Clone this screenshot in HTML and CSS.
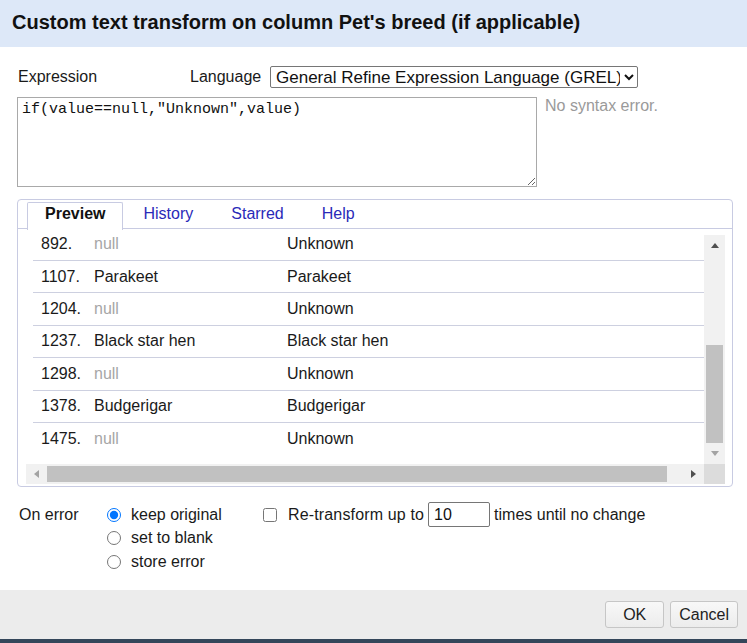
FILE: index.html
```html
<!DOCTYPE html>
<html>
<head>
<meta charset="utf-8">
<link rel="stylesheet" href="styles.css">
</head>
<body>
<div class="dialog">
  <div class="header">Custom text transform on column Pet's breed (if applicable)</div>
  <div class="body">
    <div class="expr-row">
      <span class="expr-label">Expression</span>
      <span class="lang-label">Language</span>
      <select class="lang-select"><option>General Refine Expression Language (GREL)</option></select>
    </div>
    <div class="editor-row">
      <textarea class="editor" spellcheck="false">if(value==null,"Unknown",value)</textarea>
      <div class="status">No syntax error.</div>
    </div>
    <div class="tabs">
      <div class="tabnav">
        <div class="tab active">Preview</div>
        <div class="tab">History</div>
        <div class="tab">Starred</div>
        <div class="tab">Help</div>
      </div>
      <div class="panel">
        <div class="scroller">
          <div class="viewport">
            <div class="rows">
              <div class="row"><span class="c-idx">892.</span><span class="c-val null">null</span><span class="c-res">Unknown</span></div>
              <div class="row"><span class="c-idx">1107.</span><span class="c-val">Parakeet</span><span class="c-res">Parakeet</span></div>
              <div class="row"><span class="c-idx">1204.</span><span class="c-val null">null</span><span class="c-res">Unknown</span></div>
              <div class="row"><span class="c-idx">1237.</span><span class="c-val">Black star hen</span><span class="c-res">Black star hen</span></div>
              <div class="row"><span class="c-idx">1298.</span><span class="c-val null">null</span><span class="c-res">Unknown</span></div>
              <div class="row"><span class="c-idx">1378.</span><span class="c-val">Budgerigar</span><span class="c-res">Budgerigar</span></div>
              <div class="row last"><span class="c-idx">1475.</span><span class="c-val null">null</span><span class="c-res">Unknown</span></div>
            </div>
          </div>
          <div class="vbar">
            <div class="vbtn"><span class="tri-up"></span></div>
            <div class="vtrack"><div class="vthumb"></div></div>
            <div class="vbtn"><span class="tri-down"></span></div>
          </div>
          <div class="hbar">
            <div class="hbtn"><span class="tri-left"></span></div>
            <div class="hthumb"></div>
            <div class="hbtn"><span class="tri-right"></span></div>
          </div>
          <div class="corner"></div>
        </div>
      </div>
    </div>
    <div class="options">
      <div class="opt-label">On error</div>
      <div class="radios">
        <label class="radio-line"><input type="radio" name="onerror" checked><span>keep original</span></label>
        <label class="radio-line"><input type="radio" name="onerror"><span>set to blank</span></label>
        <label class="radio-line"><input type="radio" name="onerror"><span>store error</span></label>
      </div>
      <div class="repeat">
        <input type="checkbox" class="chk">
        <span class="repeat-text">Re-transform up to</span>
        <input type="text" class="times" value="10">
        <span>times until no change</span>
      </div>
    </div>
  </div>
  <div class="footer">
    <button class="btn btn-ok">OK</button>
    <button class="btn">Cancel</button>
  </div>
</div>
</body>
</html>
```
FILE: styles.css
```css
html, body {
  margin: 0;
  padding: 0;
  background: #ffffff;
}
body {
  font-family: "Liberation Sans", Arial, sans-serif;
  font-size: 16px;
  color: #1a1a1a;
}
.dialog {
  width: 747px;
  height: 643px;
  display: flex;
  flex-direction: column;
  overflow: hidden;
}
.header {
  height: 47px;
  line-height: 45px;
  background: #dde8f8;
  padding-left: 12px;
  font-weight: bold;
  font-size: 20px;
  color: #111;
  flex: none;
  white-space: nowrap;
}
.body {
  flex: 1;
  padding: 19px 14px 0 17px;
}
.expr-row {
  display: flex;
  align-items: center;
  height: 22px;
}
.expr-label {
  width: 172px;
  padding-left: 1px;
}
.lang-label {
  width: 80px;
}
.lang-select {
  width: 368px;
  height: 22px;
  margin: 0;
  font-family: "Liberation Sans", Arial, sans-serif;
  font-size: 17px;
  color: #111;
  border: 1px solid #767676;
  border-radius: 2px;
  background: #fff;
  padding: 0 1px;
}
.editor-row {
  display: flex;
  margin-top: 9px;
}
.editor {
  width: 520px;
  height: 90px;
  box-sizing: border-box;
  border: 1px solid #a9a9a9;
  padding: 3px 4px 2px 4px;
  margin: 0;
  font-family: "Liberation Mono", "DejaVu Sans Mono", monospace;
  font-size: 15px;
  line-height: 18px;
  color: #111;
  resize: both;
}
.status {
  margin-left: 8px;
  color: #9a9a9a;
  line-height: 18px;
}
.tabs {
  margin-top: 12px;
  width: 716px;
  height: 288px;
  box-sizing: border-box;
  border: 1px solid #c8cbe2;
  border-radius: 4px;
  display: flex;
  flex-direction: column;
}
.tabnav {
  display: flex;
  height: 29px;
  box-sizing: border-box;
  padding: 2px 0 0 9px;
  border-bottom: 1px solid #c8cbe2;
  flex: none;
}
.tab {
  height: 26px;
  line-height: 22px;
  padding: 0 17px;
  border: 1px solid transparent;
  border-bottom: none;
  margin-right: 2px;
  color: #2a2ab8;
}
.tab.active {
  font-weight: bold;
  color: #111;
  background: #fff;
  border-color: #c8cbe2;
  border-radius: 2px 2px 0 0;
  height: 27px;
  margin-bottom: -1px;
}
.panel {
  flex: 1;
  padding: 6px 7px 2px 8px;
  display: flex;
}
.scroller {
  flex: 1;
  display: grid;
  grid-template-columns: 1fr 21px;
  grid-template-rows: 1fr 20px;
}
.viewport {
  overflow: hidden;
  padding-left: 7px;
}
.rows {
  margin-top: -6.4px;
}
.row {
  display: grid;
  grid-template-columns: 53px 193px 1fr;
  height: 32.4px;
  box-sizing: border-box;
  border-bottom: 1px solid #cdd0e0;
  align-items: center;
}
.row.last {
  border-bottom: none;
}
.row span {
  padding-left: 8px;
  white-space: nowrap;
}
.null {
  color: #a6a6a6;
}
.vbar {
  background: #f1f1f1;
  display: flex;
  flex-direction: column;
}
.vbtn {
  height: 21px;
  display: flex;
  align-items: center;
  justify-content: center;
  flex: none;
}
.vtrack {
  flex: 1;
  position: relative;
}
.vthumb {
  position: absolute;
  left: 2px;
  right: 2px;
  top: 89px;
  height: 98px;
  background: #c1c1c1;
}
.tri-up {
  width: 0;
  height: 0;
  border-left: 4px solid transparent;
  border-right: 4px solid transparent;
  border-bottom: 5px solid #505050;
}
.tri-down {
  width: 0;
  height: 0;
  border-left: 4px solid transparent;
  border-right: 4px solid transparent;
  border-top: 5px solid #a3a3a3;
}
.hbar {
  background: #f1f1f1;
  display: flex;
  align-items: center;
}
.hbtn {
  width: 21px;
  height: 20px;
  display: flex;
  align-items: center;
  justify-content: center;
  flex: none;
}
.hthumb {
  flex: 1;
  height: 16px;
  background: #c1c1c1;
  margin: 0 16px 0 0;
}
.tri-left {
  width: 0;
  height: 0;
  border-top: 4px solid transparent;
  border-bottom: 4px solid transparent;
  border-right: 5px solid #a3a3a3;
}
.tri-right {
  width: 0;
  height: 0;
  border-top: 4px solid transparent;
  border-bottom: 4px solid transparent;
  border-left: 5px solid #505050;
}
.corner {
  background: #dcdcdc;
}
.options {
  display: flex;
  margin-top: 16px;
}
.opt-label {
  width: 88px;
  padding-left: 2px;
  line-height: 23.5px;
}
.radios {
  width: 156px;
  display: flex;
  flex-direction: column;
}
.radio-line {
  display: flex;
  align-items: center;
  height: 23.5px;
}
.radio-line input {
  margin: 0 10px 0 0;
  width: 14px;
  height: 14px;
}
.repeat {
  display: flex;
  align-items: center;
  height: 23.5px;
}
.chk {
  margin: 0 11px 0 0;
  width: 14px;
  height: 14px;
}
.repeat-text {
  letter-spacing: 0.15px;
}
.times {
  width: 62px;
  height: 25px;
  box-sizing: border-box;
  margin: 0 4px;
  padding: 0 5px;
  border: 1px solid #767676;
  border-radius: 2px;
  font-family: "Liberation Sans", Arial, sans-serif;
  font-size: 16px;
  color: #111;
}
.footer {
  flex: none;
  height: 49px;
  background: #ececec;
  border-bottom: 4px solid #34465a;
  display: flex;
  justify-content: flex-end;
  align-items: center;
  padding-right: 9px;
  gap: 6px;
}
.btn {
  height: 27px;
  padding: 0 8px;
  border: 1px solid #c6c6c6;
  border-radius: 3px;
  background: linear-gradient(#f8f8f8, #ececec);
  font-family: "Liberation Sans", Arial, sans-serif;
  font-size: 16px;
  color: #222;
}
.btn-ok {
  min-width: 59px;
}
```
